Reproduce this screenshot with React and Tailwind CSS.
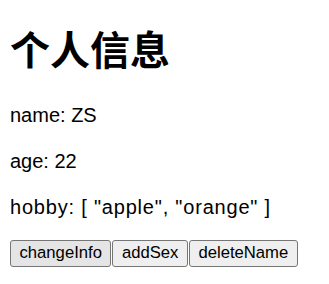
export default function App() {
  const person = { name: "ZS", age: 22, hobby: ["apple", "orange"] };

  return (
    <div className="bg-white p-[10px] font-['Liberation_Sans','Noto_Sans_CJK_SC',sans-serif] text-black">
      <h1 className="mt-[13px] text-[40px] font-bold leading-[50px] font-['Noto_Sans_CJK_SC',sans-serif]">
        个人信息
      </h1>
      <div className="mt-[31px] flex flex-col gap-[23px] text-[20px] leading-[23px]">
        <p>name: {person.name}</p>
        <p>age: {person.age}</p>
        <p className="tracking-[0.8px]">
          hobby: [ {person.hobby.map((h) => `"${h}"`).join(", ")} ]
        </p>
      </div>
      <div className="mt-[21px] flex gap-[1px] text-[16.67px]">
        <button className="h-[27px] rounded-[3px] border border-[#767676] bg-[#e5e5e5] px-[8.5px] leading-none">
          changeInfo
        </button>
        <button className="h-[27px] rounded-[3px] border border-[#767676] bg-[#efefef] px-[8.5px] leading-none">
          addSex
        </button>
        <button className="h-[27px] rounded-[3px] border border-[#767676] bg-[#efefef] px-[8.5px] leading-none">
          deleteName
        </button>
      </div>
    </div>
  );
}
